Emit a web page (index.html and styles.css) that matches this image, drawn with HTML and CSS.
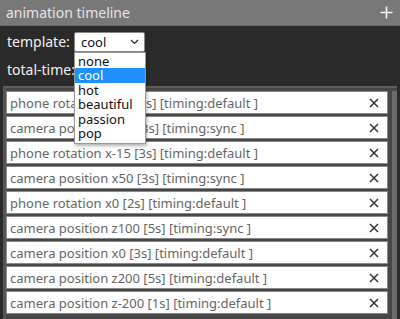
FILE: index.html
```html
<!DOCTYPE html>
<html lang="en">
<head>
    <meta charset="UTF-8">
    <title>animation timeline</title>
    <link rel="stylesheet" href="styles.css">
</head>
<body>

<div class="panel">
    <div class="header">
        <span class="title">animation timeline</span>
        <svg class="add" width="13" height="13" viewBox="0 0 13 13"><path d="M6.5 0.5 V12.5 M0.5 6.5 H12.5" stroke="#f4f4f4" stroke-width="1.6"/></svg>
    </div>

    <div class="controls">
        <div class="row">
            <label class="label">template:</label>
            <div class="select-wrap">
                <div class="select">
                    <span>cool</span>
                    <svg class="chevron" width="9" height="6" viewBox="0 0 9 6"><path d="M1 1 L4.5 4.5 L8 1" fill="none" stroke="#222" stroke-width="1.2"/></svg>
                </div>
                <ul class="options">
                    <li>none</li>
                    <li class="selected">cool</li>
                    <li>hot</li>
                    <li>beautiful</li>
                    <li>passion</li>
                    <li>pop</li>
                </ul>
            </div>
        </div>
        <div class="row">
            <label class="label">total-time:</label>
        </div>
    </div>

    <div class="list">
        <div class="items">
            <div class="item"><span>phone rotation x-15 [3s] [timing:default ]</span><svg class="remove" width="10" height="10" viewBox="0 0 10 10"><path d="M1 1 L9 9 M9 1 L1 9" stroke="#333" stroke-width="1.5"/></svg></div>
            <div class="item"><span>camera position x50 [3s] [timing:sync ]</span><svg class="remove" width="10" height="10" viewBox="0 0 10 10"><path d="M1 1 L9 9 M9 1 L1 9" stroke="#333" stroke-width="1.5"/></svg></div>
            <div class="item"><span>phone rotation x-15 [3s] [timing:default ]</span><svg class="remove" width="10" height="10" viewBox="0 0 10 10"><path d="M1 1 L9 9 M9 1 L1 9" stroke="#333" stroke-width="1.5"/></svg></div>
            <div class="item"><span>camera position x50 [3s] [timing:sync ]</span><svg class="remove" width="10" height="10" viewBox="0 0 10 10"><path d="M1 1 L9 9 M9 1 L1 9" stroke="#333" stroke-width="1.5"/></svg></div>
            <div class="item"><span>phone rotation x0 [2s] [timing:default ]</span><svg class="remove" width="10" height="10" viewBox="0 0 10 10"><path d="M1 1 L9 9 M9 1 L1 9" stroke="#333" stroke-width="1.5"/></svg></div>
            <div class="item"><span>camera position z100 [5s] [timing:sync ]</span><svg class="remove" width="10" height="10" viewBox="0 0 10 10"><path d="M1 1 L9 9 M9 1 L1 9" stroke="#333" stroke-width="1.5"/></svg></div>
            <div class="item"><span>camera position x0 [3s] [timing:default ]</span><svg class="remove" width="10" height="10" viewBox="0 0 10 10"><path d="M1 1 L9 9 M9 1 L1 9" stroke="#333" stroke-width="1.5"/></svg></div>
            <div class="item"><span>camera position z200 [5s] [timing:default ]</span><svg class="remove" width="10" height="10" viewBox="0 0 10 10"><path d="M1 1 L9 9 M9 1 L1 9" stroke="#333" stroke-width="1.5"/></svg></div>
            <div class="item"><span>camera position z-200 [1s] [timing:default ]</span><svg class="remove" width="10" height="10" viewBox="0 0 10 10"><path d="M1 1 L9 9 M9 1 L1 9" stroke="#333" stroke-width="1.5"/></svg></div>
        </div>
        <div class="scrollbar"></div>
    </div>
</div>

</body>
</html>
```

FILE: styles.css
```css
body {
    margin: 0;
    background-color: #2a2a2a;
    font-family: "Noto Sans", "DejaVu Sans", sans-serif;
    overflow: hidden;
}

.panel {
    width: 400px;
    height: 319px;
    display: flex;
    flex-direction: column;
}

.header {
    height: 26px;
    background-color: #787878;
    border-bottom: 1px solid #6a6a6a;
    color: #e6e6e6;
    font-size: 14px;
    display: flex;
    align-items: center;
    justify-content: space-between;
    padding: 0 7px 0 6px;
    box-sizing: border-box;
}

.controls {
    height: 60px;
    padding: 5px 7px 0;
    box-sizing: border-box;
}

.row {
    display: flex;
    align-items: center;
    height: 21px;
    margin-bottom: 7px;
}

.label {
    color: #f2f2f2;
    font-size: 14px;
    min-width: 67px;
    white-space: nowrap;
}

.select-wrap {
    position: relative;
}

.select {
    width: 71px;
    height: 20px;
    box-sizing: border-box;
    background-color: #fff;
    border: 1px solid #888;
    border-radius: 2px;
    display: flex;
    align-items: center;
    justify-content: space-between;
    padding: 0 5px 0 6px;
    font-size: 13px;
    color: #111;
}

.options {
    position: absolute;
    left: 0;
    top: 20px;
    width: 72px;
    margin: 0;
    padding: 1px 0 2px;
    list-style: none;
    background-color: #fff;
    border: 1px solid #999;
    box-sizing: border-box;
    box-shadow: 1px 2px 3px rgba(0, 0, 0, 0.3);
    z-index: 5;
}

.options li {
    height: 14.5px;
    line-height: 14.5px;
    font-size: 13px;
    padding-left: 3px;
    color: #111;
}

.options li.selected {
    background-color: #1e90ff;
    color: #fff;
}

.list {
    flex: 1;
    margin: 0 3px;
    background-color: #474747;
    border-top: 2px solid #5e5e5e;
    border-left: 3px solid #555;
    display: flex;
    padding: 3px 0 0 0;
}

.items {
    flex: 1;
    display: flex;
    flex-direction: column;
    gap: 2px;
}

.item {
    height: 23px;
    box-sizing: border-box;
    background-color: #fff;
    border: 1px solid #8a8a8a;
    display: flex;
    align-items: center;
    justify-content: space-between;
    padding: 0 8px 0 3px;
    font-size: 13px;
    color: #666;
}

.scrollbar {
    width: 5px;
    margin-left: 4px;
    background-color: #6a6a6a;
}
```
